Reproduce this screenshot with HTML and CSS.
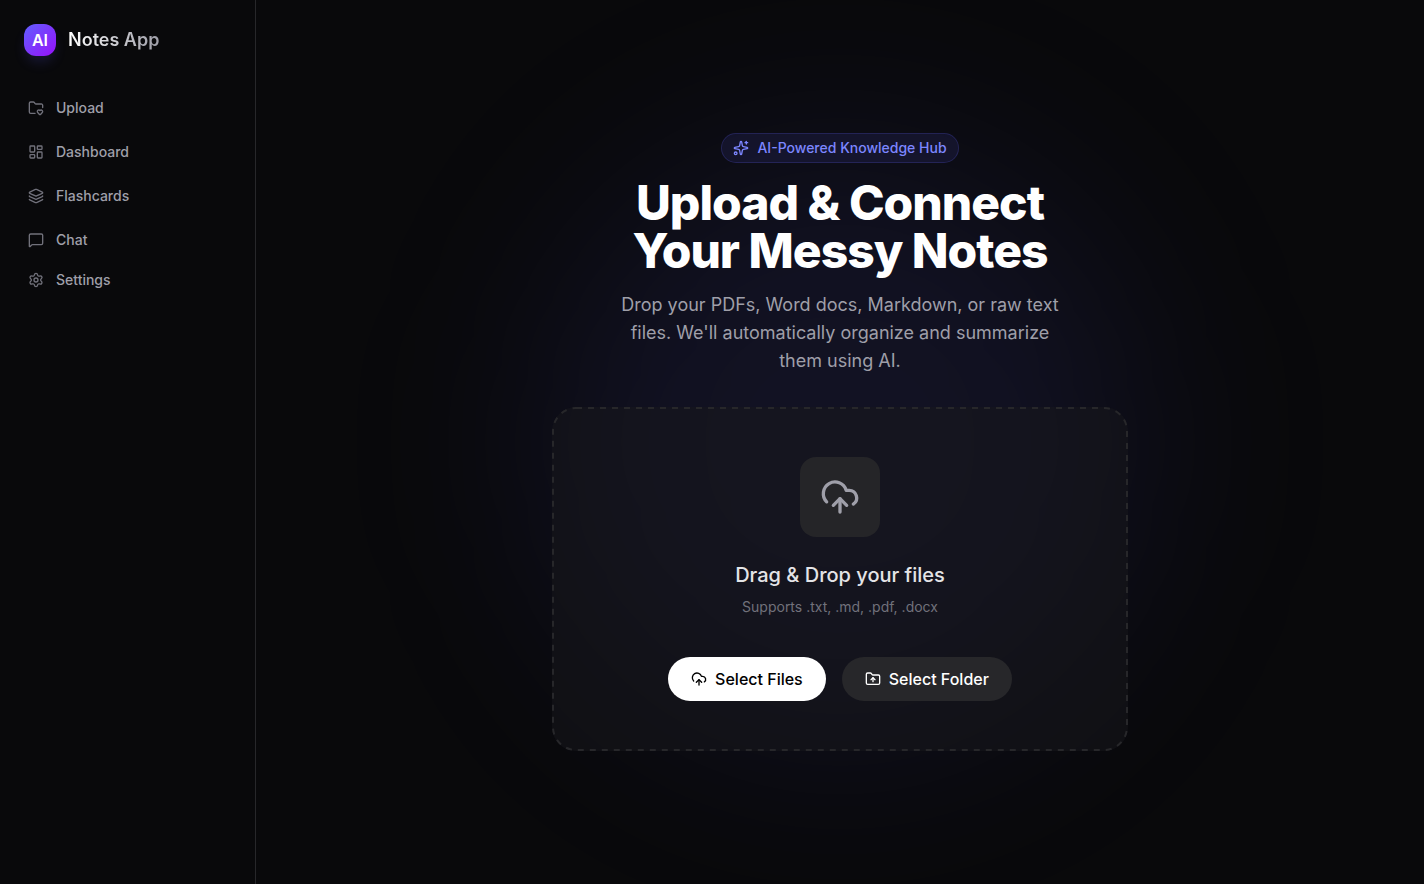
FILE: index.html
```html
<!DOCTYPE html>
<html lang="en">
<head>
    <meta charset="UTF-8">
    <meta name="viewport" content="width=device-width, initial-scale=1.0">
    <title>AI Notes App</title>
    <link rel="stylesheet" href="styles.css">
</head>
<body>
    <aside class="sidebar">
        <div class="brand">
            <span class="logo">AI</span>
            <span class="brand-name">Notes App</span>
        </div>
        <nav class="nav">
            <a href="#upload">
                <svg class="icon" viewBox="0 0 24 24"><path d="M10.638 20H4a2 2 0 0 1-2-2V5a2 2 0 0 1 2-2h3.9a2 2 0 0 1 1.69.9l.81 1.2a2 2 0 0 0 1.67.9H20a2 2 0 0 1 2 2v3.417"/><path d="M14.62 18.8A2.25 2.25 0 1 1 18 15.836a2.25 2.25 0 1 1 3.38 2.966l-2.626 2.856a.998.998 0 0 1-1.507 0z"/></svg>
                Upload
            </a>
            <a href="#dashboard">
                <svg class="icon" viewBox="0 0 24 24"><rect width="7" height="9" x="3" y="3" rx="1"/><rect width="7" height="5" x="14" y="3" rx="1"/><rect width="7" height="9" x="14" y="12" rx="1"/><rect width="7" height="5" x="3" y="16" rx="1"/></svg>
                Dashboard
            </a>
            <a href="#flashcards">
                <svg class="icon" viewBox="0 0 24 24"><path d="M12.83 2.18a2 2 0 0 0-1.66 0L2.6 6.08a1 1 0 0 0 0 1.83l8.58 3.91a2 2 0 0 0 1.66 0l8.58-3.9a1 1 0 0 0 0-1.83z"/><path d="M2 12a1 1 0 0 0 .58.91l8.6 3.91a2 2 0 0 0 1.65 0l8.58-3.9A1 1 0 0 0 22 12"/><path d="M2 17a1 1 0 0 0 .58.91l8.6 3.91a2 2 0 0 0 1.65 0l8.58-3.9A1 1 0 0 0 22 17"/></svg>
                Flashcards
            </a>
            <a href="#chat">
                <svg class="icon" viewBox="0 0 24 24"><path d="M22 17a2 2 0 0 1-2 2H6.828a2 2 0 0 0-1.414.586l-2.202 2.202A.71.71 0 0 1 2 21.286V5a2 2 0 0 1 2-2h16a2 2 0 0 1 2 2z"/></svg>
                Chat
            </a>
        </nav>
        <nav class="nav">
            <a href="#settings">
                <svg class="icon" viewBox="0 0 24 24"><path d="M9.671 4.136a2.34 2.34 0 0 1 4.659 0 2.34 2.34 0 0 0 3.319 1.915 2.34 2.34 0 0 1 2.33 4.033 2.34 2.34 0 0 0 0 3.831 2.34 2.34 0 0 1-2.33 4.033 2.34 2.34 0 0 0-3.319 1.915 2.34 2.34 0 0 1-4.659 0 2.34 2.34 0 0 0-3.32-1.915 2.34 2.34 0 0 1-2.33-4.033 2.34 2.34 0 0 0 0-3.831A2.34 2.34 0 0 1 6.35 6.051a2.34 2.34 0 0 0 3.319-1.915"/><circle cx="12" cy="12" r="3"/></svg>
                Settings
            </a>
        </nav>
    </aside>

    <main class="content">
        <div class="glow"></div>
        <div class="badge">
            <svg class="icon" viewBox="0 0 24 24"><path d="M11.017 2.814a1 1 0 0 1 1.966 0l1.051 5.558a2 2 0 0 0 1.594 1.594l5.558 1.051a1 1 0 0 1 0 1.966l-5.558 1.051a2 2 0 0 0-1.594 1.594l-1.051 5.558a1 1 0 0 1-1.966 0l-1.051-5.558a2 2 0 0 0-1.594-1.594l-5.558-1.051a1 1 0 0 1 0-1.966l5.558-1.051a2 2 0 0 0 1.594-1.594z"/><path d="M20 2v4"/><path d="M22 4h-4"/><circle cx="4" cy="20" r="2"/></svg>
            AI-Powered Knowledge Hub
        </div>
        <h1>Upload &amp; Connect<br>Your Messy Notes</h1>
        <p class="intro">Drop your PDFs, Word docs, Markdown, or raw text files. We'll automatically organize and summarize them using AI.</p>

        <section class="dropzone">
            <svg class="dashes"><rect x="1" y="1" rx="23"/></svg>
            <div class="drop-icon">
                <svg class="icon" viewBox="0 0 24 24"><path d="M12 13v8"/><path d="M4 14.899A7 7 0 1 1 15.71 8h1.79a4.5 4.5 0 0 1 2.5 8.242"/><path d="m8 17 4-4 4 4"/></svg>
            </div>
            <h2>Drag &amp; Drop your files</h2>
            <p class="formats">Supports .txt, .md, .pdf, .docx</p>
            <div class="actions">
                <button type="button" class="btn btn-light">
                    <svg class="icon" viewBox="0 0 24 24"><path d="M12 13v8"/><path d="M4 14.899A7 7 0 1 1 15.71 8h1.79a4.5 4.5 0 0 1 2.5 8.242"/><path d="m8 17 4-4 4 4"/></svg>
                    Select Files
                </button>
                <button type="button" class="btn btn-dark">
                    <svg class="icon" viewBox="0 0 24 24"><path d="M20 20a2 2 0 0 0 2-2V8a2 2 0 0 0-2-2h-7.9a2 2 0 0 1-1.69-.9L9.6 3.9A2 2 0 0 0 7.93 3H4a2 2 0 0 0-2 2v13a2 2 0 0 0 2 2Z"/><path d="M12 10v6"/><path d="m9 13 3-3 3 3"/></svg>
                    Select Folder
                </button>
            </div>
        </section>
    </main>
</body>
</html>
```
FILE: styles.css
```css
* {
    box-sizing: border-box;
    margin: 0;
}
body {
    display: flex;
    min-height: 100vh;
    background-color: #09090b;
    color: #fff;
    font-family: Inter, sans-serif;
    font-size: 14px;
    line-height: 20px;
}
.icon {
    width: 16px;
    height: 16px;
    flex-shrink: 0;
    fill: none;
    stroke: currentColor;
    stroke-width: 2;
    stroke-linecap: round;
    stroke-linejoin: round;
}

/* Sidebar */
.sidebar {
    width: 256px;
    flex-shrink: 0;
    border-right: 1px solid #27272a;
}
.brand {
    display: flex;
    align-items: center;
    gap: 12px;
    padding: 24px 24px 32px;
}
.logo {
    display: flex;
    align-items: center;
    justify-content: center;
    width: 32px;
    height: 32px;
    border-radius: 12px;
    background: linear-gradient(135deg, #615fff, #9810fa);
    box-shadow: 0 8px 14px -3px rgba(97, 95, 255, 0.2);
    font-size: 16px;
    font-weight: 600;
}
.brand-name {
    background: linear-gradient(to right, #fff, #9f9fa9);
    background-clip: text;
    color: transparent;
    font-size: 18px;
    font-weight: 600;
    line-height: 28px;
}
.nav {
    display: flex;
    flex-direction: column;
    gap: 4px;
    padding: 0 16px;
}
.nav a {
    display: flex;
    align-items: center;
    gap: 12px;
    height: 40px;
    padding: 0 12px;
    color: #9f9fa9;
    font-weight: 500;
    text-decoration: none;
}
.nav .icon {
    color: #71717b;
}

/* Main area */
.content {
    position: relative;
    display: flex;
    flex: 1;
    flex-direction: column;
    align-items: center;
    justify-content: center;
    overflow: hidden;
    isolation: isolate;
    text-align: center;
}
.glow {
    position: absolute;
    top: 50%;
    left: 50%;
    z-index: -1;
    width: 600px;
    height: 600px;
    border-radius: 50%;
    background-color: rgba(97, 95, 255, 0.1);
    filter: blur(100px);
    transform: translate(-50%, -50%);
}
.badge {
    display: flex;
    align-items: center;
    gap: 8px;
    padding: 4px 11px;
    border: 1px solid rgba(97, 95, 255, 0.2);
    border-radius: 15px;
    background-color: rgba(97, 95, 255, 0.1);
    color: #7c86ff;
    font-weight: 500;
}
h1 {
    margin-top: 16px;
    font-size: 48px;
    font-weight: 800;
    line-height: 48px;
    letter-spacing: -1px;
}
.intro {
    max-width: 448px;
    margin-top: 16px;
    color: #9f9fa9;
    font-size: 18px;
    line-height: 28px;
}
.dropzone {
    position: relative;
    width: 100%;
    max-width: 576px;
    margin-top: 32px;
    padding: 50px;
    border-radius: 24px;
    background-color: rgba(24, 24, 27, 0.5);
}
.dashes {
    position: absolute;
    inset: 0;
    width: 100%;
    height: 100%;
    pointer-events: none;
}
.dashes rect {
    width: calc(100% - 2px);
    height: calc(100% - 2px);
    fill: none;
    stroke: #27272a;
    stroke-width: 2px;
    stroke-dasharray: 6 6;
}
.drop-icon {
    display: flex;
    align-items: center;
    justify-content: center;
    width: 80px;
    height: 80px;
    margin: 0 auto 24px;
    border-radius: 16px;
    background-color: #252528;
    color: #9f9fa9;
}
.drop-icon .icon {
    width: 40px;
    height: 40px;
}
h2 {
    color: #e4e4e7;
    font-size: 20px;
    font-weight: 500;
    line-height: 28px;
}
.formats {
    margin-top: 8px;
    color: #71717b;
}
.actions {
    display: flex;
    justify-content: center;
    gap: 16px;
    margin-top: 40px;
}
.btn {
    display: flex;
    align-items: center;
    gap: 8px;
    height: 44px;
    padding: 0 23px;
    border: 0;
    border-radius: 22px;
    font: 500 16px/24px Inter, sans-serif;
}
.btn-light {
    background-color: #fff;
    color: #000;
}
.btn-dark {
    background-color: #27272a;
    color: #fff;
}
```
